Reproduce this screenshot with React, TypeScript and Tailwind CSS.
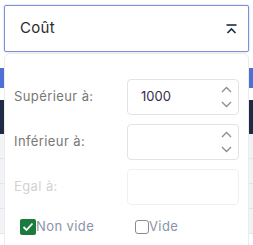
import React from "react";

function Spinner() {
  return (
    <div className="flex flex-col items-center gap-[8px] text-[#8f8f8f]">
      <svg width="11" height="7" viewBox="0 0 11 7" fill="none">
        <path d="M1 6L5.5 1.5L10 6" stroke="currentColor" strokeWidth="1.4" />
      </svg>
      <svg width="11" height="7" viewBox="0 0 11 7" fill="none">
        <path d="M1 1L5.5 5.5L10 1" stroke="currentColor" strokeWidth="1.4" />
      </svg>
    </div>
  );
}

interface FieldProps {
  label: string;
  value?: string;
  disabled?: boolean;
}

function Field({ label, value, disabled }: FieldProps) {
  return (
    <div className="flex items-center h-[36px]">
      <span
        className={`w-[122px] pl-[9px] text-[13px] tracking-[0.4px] ${
          disabled ? "text-[#d2d2d2]" : "text-[#777777]"
        }`}
      >
        {label}
      </span>
      <div
        className={`flex items-center justify-between w-[112px] h-full rounded-[4px] border pl-[13px] pr-[6px] ${
          disabled ? "border-[#f0f0f0]" : "border-[#e3e3e3]"
        }`}
      >
        <span className="text-[13px] text-[#3b2a4f]">{value}</span>
        {!disabled && <Spinner />}
      </div>
    </div>
  );
}

export default function App() {
  return (
    <div
      className="relative w-[253px] h-[245px] bg-white overflow-hidden"
      style={{ fontFamily: "Inter, 'Open Sans', sans-serif" }}
    >
      {/* table behind the popover */}
      <div className="flex flex-col pt-[68px]">
        <div className="h-[20px] bg-[#4d6fd6]" />
        <div className="h-[12px] bg-white" />
        <div className="h-[34px] bg-[#1f2a44]" />
        <div className="flex flex-col bg-[#f1f3f6]">
          <div className="h-[25px] border-b border-[#e2e5ea]" />
          <div className="h-[25px] border-b border-[#e2e5ea]" />
          <div className="h-[25px] border-b border-[#e2e5ea]" />
          <div className="h-[25px] border-b border-[#e2e5ea]" />
        </div>
      </div>

      {/* filter popover */}
      <div className="absolute left-[4px] top-[5px] w-[245px] flex flex-col">
        <div className="flex items-center justify-between h-[47px] bg-white border border-[#7d8fd9] rounded-[2px] shadow-[0_0_2px_rgba(80,100,200,0.4)] pl-[15px] pr-[11px]">
          <span className="text-[15px] tracking-[0.3px] text-[#2b2b2b]">Coût</span>
          <svg width="11" height="10" viewBox="0 0 11 10" fill="none">
            <path d="M0.5 1H10.5" stroke="#1e2a44" strokeWidth="1.6" />
            <path d="M1.5 9L5.5 5L9.5 9" stroke="#1e2a44" strokeWidth="1.6" />
          </svg>
        </div>
        <div className="mt-[1px] h-[200px] bg-white border border-[#ececec] rounded-t-[6px] flex flex-col pt-[25px]">
          <div className="flex flex-col gap-[9px]">
            <Field label="Supérieur à:" value="1000" />
            <Field label="Inférieur à:" />
            <Field label="Egal à:" disabled />
          </div>
          <div className="flex items-center mt-[12px] pl-[15px] text-[13px] tracking-[0.4px]">
            <div className="flex items-center w-[115px]">
              <span className="flex items-center justify-center w-[16px] h-[16px] rounded-[2px] bg-[#1b7a3e]">
                <svg width="12" height="10" viewBox="0 0 12 10" fill="none">
                  <path d="M1.5 5L4.5 8L10.5 1.5" stroke="white" strokeWidth="1.8" />
                </svg>
              </span>
              <span className="text-[#8a93a8]">Non vide</span>
            </div>
            <div className="flex items-center">
              <span className="w-[14px] h-[14px] rounded-[3px] border border-[#8a8a8a]" />
              <span className="text-[#8a93a8]">Vide</span>
            </div>
          </div>
        </div>
      </div>
    </div>
  );
}
